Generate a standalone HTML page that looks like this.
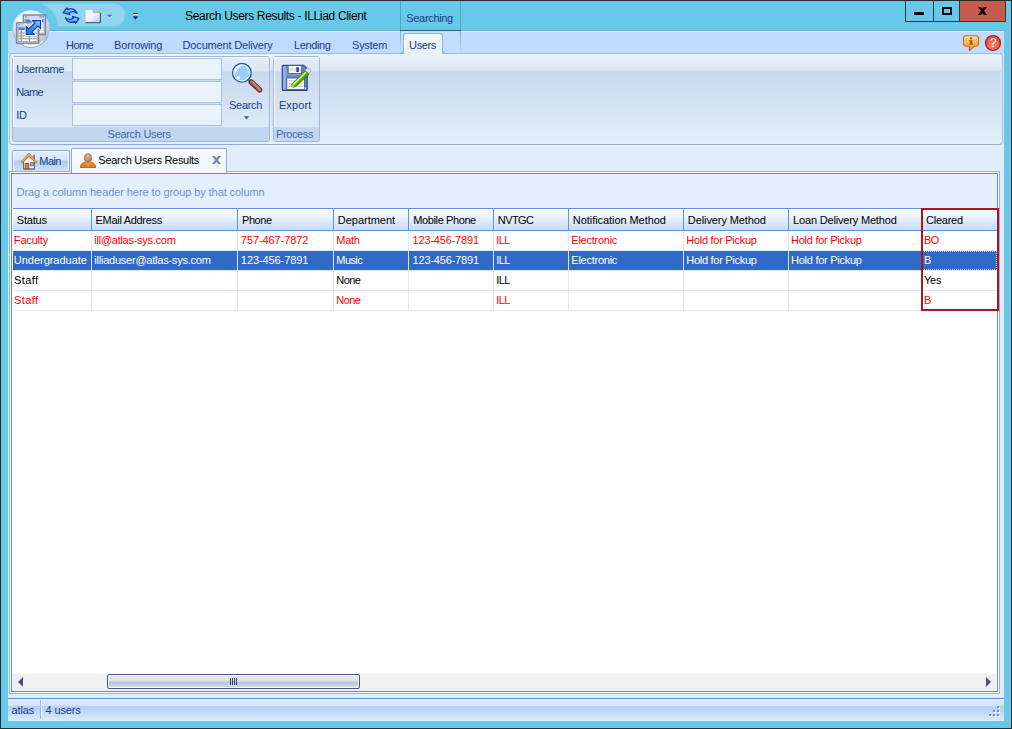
<!DOCTYPE html>
<html>
<head>
<meta charset="utf-8">
<title>Search Users Results - ILLiad Client</title>
<style>
html,body{margin:0;padding:0;}
body{width:1012px;height:729px;overflow:hidden;background:#67c9e8;font-family:"Liberation Sans",sans-serif;font-size:11px;color:#15428b;}
#win{position:absolute;left:0;top:0;width:1012px;height:729px;background:#67c9e8;overflow:hidden;}
.abs{position:absolute;}
.t{position:absolute;white-space:nowrap;line-height:13px;height:13px;}
/* window border */
#bt{left:0;top:0;width:1012px;height:1px;background:#2a2a2a;}
#bl{left:0;top:0;width:1px;height:729px;background:#2a2a2a;}
#br{left:1011px;top:0;width:1px;height:729px;background:#2a2a2a;}
#bb{left:0;top:728px;width:1012px;height:1px;background:#2a2a2a;}
/* client */
#client{left:8px;top:31px;width:996px;height:690px;background:#e1edfc;}
#tabrow{left:8px;top:31px;width:996px;height:23px;background:#bfdbff;}
/* ribbon panel */
#ribbon{left:9px;top:53px;width:994px;height:92px;border:1px solid #a3bce3;border-bottom-color:#94aaca;border-radius:4px;box-sizing:border-box;box-shadow:inset 0 0 0 1px #daf6fc;
 background:linear-gradient(to bottom,#ebf2fb 0px,#dde8f6 16px,#c8d9ed 17px,#e3effb 89px);}
.grp{position:absolute;top:56px;height:86px;border:1px solid #a0b9da;border-radius:3px;box-sizing:border-box;
 background:linear-gradient(to bottom,#e6effa 0px,#d9e6f5 14px,#c9daee 15px,#dde9f7 70px,#c1d7ef 70px,#c1d7ef 100%);}
.grp:before{content:"";position:absolute;left:0;top:0;width:1px;height:70px;background:rgba(255,255,255,.85);}
.grp:after{content:"";position:absolute;left:0;top:0;right:0;height:1px;background:rgba(255,255,255,.7);}
.inp{position:absolute;left:72px;width:150px;height:22px;box-sizing:border-box;border:1px solid #abc1de;background:#eaf2fb;}
/* doc tabs */
#tabMain{left:12px;top:150px;width:58px;height:22px;box-sizing:border-box;border:1px solid #8aa9d8;border-bottom:none;border-radius:2px 2px 0 0;box-shadow:inset 1px 1px 0 #f2f7fe,inset -1px 0 0 #f2f7fe;
 background:linear-gradient(to bottom,#e2ecfb 0,#d9e6f9 9px,#b4cdf1 10px,#bdd3f3 14px,#d5e3f8 21px);}
#tabRes{left:71px;top:148px;width:156px;height:25px;box-sizing:border-box;border:1px solid #8aa9d8;border-bottom:none;border-radius:2px 2px 0 0;background:linear-gradient(to bottom,#ffffff 0,#f6f9fe 4px,#f3f7fe 100%);}
#panel{left:9px;top:171px;width:991px;height:523px;box-sizing:border-box;border:1px solid #9bb0d4;background:#fff;}
#panelIn{left:11px;top:173px;width:987px;height:519px;box-sizing:border-box;border:1px solid #5d8ad0;background:#fff;}
#groupbar{left:12px;top:174px;width:985px;height:34px;background:#e4eefc;}
#hdr{left:13px;top:208px;width:984px;height:23px;box-sizing:border-box;border-top:1px solid #6093d8;border-bottom:1px solid #6093d8;
 background:linear-gradient(to bottom,#fbfdff 0,#eaf3fe 40%,#d5e5fa 70%,#c6dcf8 100%);}
.hs{position:absolute;top:209px;width:1px;height:21px;background:#6093d8;}
.vs{position:absolute;top:231px;width:1px;height:80px;background:#dfe9f9;}
.hl{position:absolute;left:13px;width:984px;height:1px;background:#dfe9f9;}
#sel{left:13px;top:251px;width:984px;height:19px;background:#316ac5;}
.ht{color:#000;}
.r{color:#ee1c25;}
.k{color:#000;}
.w{color:#fff;}

#focus{left:922px;top:251px;width:75px;height:19px;box-sizing:border-box;border:1px dotted #e9d09a;}
#redbox{left:921px;top:208px;width:78px;height:103px;box-sizing:border-box;border:2px solid #b3131d;}
#sbar{left:12px;top:673px;width:984px;height:18px;background:#f0f0f0;border-top:1px solid #fafafa;box-sizing:border-box;}
#sthumb{left:107px;top:674px;width:253px;height:15px;box-sizing:border-box;border:1px solid #46568a;border-radius:2px;box-shadow:inset 0 0 0 1px #f4f6fa;
 background:linear-gradient(to bottom,#e6e9f1 0,#dde2ec 45%,#bbc6d9 55%,#c6cfdf 75%,#e0e5ef 100%);}
#sal{left:18px;top:677px;width:0;height:0;border-top:5px solid transparent;border-bottom:5px solid transparent;border-right:5px solid #44527e;}
#sar{left:986px;top:677px;width:0;height:0;border-top:5px solid transparent;border-bottom:5px solid transparent;border-left:5px solid #44527e;}

/* window controls */
#ctl{left:905px;top:1px;width:101px;height:21px;box-sizing:border-box;border:1px solid #353535;border-top:none;background:#67c9e8;}
#ctlClose{left:960px;top:1px;width:45px;height:20px;background:#c75a4f;}
.csep{position:absolute;top:1px;width:1px;height:20px;background:#353535;}
/* context tab */
#ctx{left:400px;top:1px;width:61px;height:53px;box-sizing:border-box;border-left:1px solid #4fa3bf;border-right:1px solid #4fa3bf;}
#ctxLine{left:400px;top:30px;width:61px;height:1px;background:#2f5f78;}
#ctxLow{left:401px;top:31px;width:59px;height:22px;background:#c4deff;}
#ctxL{left:400px;top:31px;width:1px;height:22px;background:linear-gradient(to bottom,#7fa6d8,#bfdbff);}
#ctxR{left:460px;top:31px;width:1px;height:22px;background:linear-gradient(to bottom,#7fa6d8,#bfdbff);}
#tabUsers{left:403px;top:33px;width:40px;height:21px;box-sizing:border-box;border:1px solid #8db2e3;border-bottom:none;border-radius:3px 3px 0 0;
 background:linear-gradient(to bottom,#f4f8fe 0,#e8effa 100%);box-shadow:inset -1px 1px 0 #e4fbff, inset 1px 0 0 #f8fbff;}
#tabUsersFoot{left:404px;top:53px;width:38px;height:2px;background:#e9f0fa;}
#footL{left:400px;top:51px;width:3px;height:3px;border-bottom:1px solid #8db2e3;border-right:1px solid #8db2e3;border-radius:0 0 3px 0;box-sizing:border-box;}
#footR{left:443px;top:51px;width:3px;height:3px;border-bottom:1px solid #8db2e3;border-left:1px solid #8db2e3;border-radius:0 0 0 3px;box-sizing:border-box;}
/* QAT */
#qat{left:44px;top:4px;width:81px;height:22px;box-sizing:border-box;border:1px solid #7fd2ec;border-radius:0 11px 11px 0;background:#8dd5ee;}
/* status bar */
#status{left:8px;top:698px;width:996px;height:23px;background:linear-gradient(to bottom,#5d8acb 0,#5d8acb 1px,#f3f8fe 1px,#f3f8fe 2px,#d9e7fb 2px,#d3e3fa 8px,#b6d0f5 8px,#bcd4f6 12px,#dce9fa 22px,#e4eefb 23px);}
.grip{position:absolute;width:2px;height:2px;background:#fff;}
.grip:before{content:"";position:absolute;left:-1px;top:-1px;width:2px;height:2px;background:#5c8cda;}
</style>
</head>
<body>
<div id="win">
<div class="abs" id="client"></div>
<div class="abs" id="tabrow"></div>
<div class="abs" style="left:8px;top:30px;width:996px;height:1px;background:#5fb2cf"></div><div class="abs" style="left:8px;top:31px;width:996px;height:1px;background:#e2eefd"></div>


<!-- context tab + controls -->
<div class="abs" id="ctx"></div><div class="abs" id="ctxLow"></div><div class="abs" id="ctxL"></div><div class="abs" id="ctxR"></div><div class="abs" id="ctxLine"></div>
<div class="abs" id="ctl"></div><div class="abs" id="ctlClose"></div>
<div class="csep" style="left:933px"></div><div class="csep" style="left:959px"></div>
<div class="abs" style="left:914px;top:12px;width:10px;height:3px;background:#000"></div>
<div class="abs" style="left:942px;top:7px;width:10px;height:8px;box-sizing:border-box;border:2px solid #000;border-top-width:2px"></div>
<svg class="abs" style="left:977px;top:6px" width="11" height="10" viewBox="977 6 11 10"><path d="M978 7 H981.2 L987 15 H983.8 Z M983.8 7 H987 L981.2 15 H978 Z" fill="#000"/></svg>
<svg class="abs" style="left:40px;top:2px" width="88" height="26" viewBox="40 2 88 26"><path d="M42.5 3.8 H114 A11.1 11.1 0 0 1 114 26 H58.6 A27.6 27.6 0 0 0 42.5 3.8 Z" fill="#8fd5ee" stroke="#84d1ec" stroke-width="1"/></svg>
<!-- title -->

<!-- ribbon tabs -->

<div class="abs" id="ribbon"></div>
<div class="abs" id="tabUsers"></div><div class="abs" id="tabUsersFoot"></div><div class="abs" id="footL"></div><div class="abs" id="footR"></div>
<div class="grp" style="left:12px;width:258px;"></div>
<div class="grp" style="left:273px;width:47px;"></div>
<div class="inp" style="top:58px;"></div>
<div class="inp" style="top:81px;"></div>
<div class="inp" style="top:104px;"></div>

<!-- doc tabs -->
<div class="abs" id="tabMain"></div>
<div class="abs" id="panel"></div>
<div class="abs" id="panelIn"></div>
<div class="abs" id="tabRes"></div>

<div class="abs" id="groupbar"></div>
<div class="abs" id="hdr"></div>

<div class="hs" style="left:91px"></div><div class="vs" style="left:91px"></div>
<div class="hs" style="left:237px"></div><div class="vs" style="left:237px"></div>
<div class="hs" style="left:333px"></div><div class="vs" style="left:333px"></div>
<div class="hs" style="left:408px"></div><div class="vs" style="left:408px"></div>
<div class="hs" style="left:493px"></div><div class="vs" style="left:493px"></div>
<div class="hs" style="left:568px"></div><div class="vs" style="left:568px"></div>
<div class="hs" style="left:683px"></div><div class="vs" style="left:683px"></div>
<div class="hs" style="left:788px"></div><div class="vs" style="left:788px"></div>
<div class="hs" style="left:921px"></div><div class="vs" style="left:921px"></div>
<div class="hl" style="top:250px"></div>
<div class="hl" style="top:270px"></div>
<div class="hl" style="top:290px"></div>
<div class="hl" style="top:310px"></div>
<div class="abs" id="sel"></div>
<div class="abs" style="left:91px;top:251px;width:1px;height:19px;background:#d9e6f7"></div>
<div class="abs" style="left:237px;top:251px;width:1px;height:19px;background:#d9e6f7"></div>
<div class="abs" style="left:333px;top:251px;width:1px;height:19px;background:#d9e6f7"></div>
<div class="abs" style="left:408px;top:251px;width:1px;height:19px;background:#d9e6f7"></div>
<div class="abs" style="left:493px;top:251px;width:1px;height:19px;background:#d9e6f7"></div>
<div class="abs" style="left:568px;top:251px;width:1px;height:19px;background:#d9e6f7"></div>
<div class="abs" style="left:683px;top:251px;width:1px;height:19px;background:#d9e6f7"></div>
<div class="abs" style="left:788px;top:251px;width:1px;height:19px;background:#d9e6f7"></div>
<div class="abs" style="left:921px;top:251px;width:1px;height:19px;background:#d9e6f7"></div>
<div class="abs" id="focus"></div>
<div class="abs" id="redbox"></div>
<!-- scrollbar -->
<div class="abs" id="sbar"></div><div class="abs" id="sthumb"></div>
<div class="abs" style="left:230px;top:678px;width:1px;height:7px;background:#2f3f73"></div><div class="abs" style="left:232px;top:678px;width:1px;height:7px;background:#2f3f73"></div><div class="abs" style="left:234px;top:678px;width:1px;height:7px;background:#2f3f73"></div><div class="abs" style="left:236px;top:678px;width:1px;height:7px;background:#2f3f73"></div>
<div class="abs" id="sal"></div><div class="abs" id="sar"></div>


<!-- status -->
<div class="abs" id="status"></div>
<div class="abs" style="left:40px;top:700px;width:1px;height:19px;background:#9ab6df"></div><div class="abs" style="left:41px;top:700px;width:1px;height:19px;background:#eef4fd"></div>
<div class="grip" style="left:998px;top:707px"></div><div class="grip" style="left:994px;top:711px"></div><div class="grip" style="left:998px;top:711px"></div><div class="grip" style="left:990px;top:715px"></div><div class="grip" style="left:994px;top:715px"></div><div class="grip" style="left:998px;top:715px"></div>

<div class="t" style="left:185.10px;top:9px;font-size:12px;line-height:14px;height:14px;color:#000000;letter-spacing:-0.331px;">Search Users Results - ILLiad Client</div>
<div class="t" style="left:406.35px;top:12px;font-size:11px;line-height:13px;height:13px;color:#1a3a8c;letter-spacing:-0.339px;">Searching</div>
<div class="t" style="left:66.10px;top:39px;font-size:11px;line-height:13px;height:13px;color:#15428b;letter-spacing:-0.586px;">Home</div>
<div class="t" style="left:114.10px;top:39px;font-size:11px;line-height:13px;height:13px;color:#15428b;letter-spacing:-0.170px;">Borrowing</div>
<div class="t" style="left:182.60px;top:39px;font-size:11px;line-height:13px;height:13px;color:#15428b;letter-spacing:-0.172px;">Document Delivery</div>
<div class="t" style="left:294.10px;top:39px;font-size:11px;line-height:13px;height:13px;color:#15428b;letter-spacing:-0.379px;">Lending</div>
<div class="t" style="left:352.10px;top:39px;font-size:11px;line-height:13px;height:13px;color:#15428b;letter-spacing:-0.281px;">System</div>
<div class="t" style="left:409.10px;top:39px;font-size:11px;line-height:13px;height:13px;color:#15428b;letter-spacing:-0.397px;">Users</div>
<div class="t" style="left:16.20px;top:63px;font-size:11px;line-height:13px;height:13px;color:#15428b;letter-spacing:-0.369px;">Username</div>
<div class="t" style="left:16.20px;top:86px;font-size:11px;line-height:13px;height:13px;color:#15428b;letter-spacing:-0.600px;">Name</div>
<div class="t" style="left:16.20px;top:109px;font-size:11px;line-height:13px;height:13px;color:#15428b;letter-spacing:-0.350px;">ID</div>
<div class="t" style="left:229.10px;top:99px;font-size:11px;line-height:13px;height:13px;color:#15428b;letter-spacing:-0.310px;">Search</div>
<div class="t" style="left:278.90px;top:99px;font-size:11px;line-height:13px;height:13px;color:#15428b;letter-spacing:0.117px;">Export</div>
<div class="t" style="left:107.60px;top:128px;font-size:11px;line-height:13px;height:13px;color:#3e6aaa;letter-spacing:-0.303px;">Search Users</div>
<div class="t" style="left:276.10px;top:128px;font-size:11px;line-height:13px;height:13px;color:#3e6aaa;letter-spacing:-0.407px;">Process</div>
<div class="t" style="left:39.35px;top:155px;font-size:11px;line-height:13px;height:13px;color:#15428b;letter-spacing:-0.586px;">Main</div>
<div class="t" style="left:98.35px;top:154px;font-size:11px;line-height:13px;height:13px;color:#000000;letter-spacing:-0.281px;">Search Users Results</div>
<div class="t" style="left:16.60px;top:186px;font-size:11px;line-height:13px;height:13px;color:#6d92d6;letter-spacing:-0.080px;">Drag a column header here to group by that column</div>
<div class="t" style="left:16.85px;top:214px;font-size:11px;line-height:13px;height:13px;color:#000000;letter-spacing:-0.198px;">Status</div>
<div class="t" style="left:95.60px;top:214px;font-size:11px;line-height:13px;height:13px;color:#000000;letter-spacing:-0.312px;">EMail Address</div>
<div class="t" style="left:242.10px;top:214px;font-size:11px;line-height:13px;height:13px;color:#000000;letter-spacing:-0.463px;">Phone</div>
<div class="t" style="left:337.85px;top:214px;font-size:11px;line-height:13px;height:13px;color:#000000;letter-spacing:-0.023px;">Department</div>
<div class="t" style="left:413.35px;top:214px;font-size:11px;line-height:13px;height:13px;color:#000000;letter-spacing:-0.398px;">Mobile Phone</div>
<div class="t" style="left:497.85px;top:214px;font-size:11px;line-height:13px;height:13px;color:#000000;letter-spacing:-0.600px;">NVTGC</div>
<div class="t" style="left:572.85px;top:214px;font-size:11px;line-height:13px;height:13px;color:#000000;letter-spacing:-0.062px;">Notification Method</div>
<div class="t" style="left:687.85px;top:214px;font-size:11px;line-height:13px;height:13px;color:#000000;letter-spacing:-0.099px;">Delivery Method</div>
<div class="t" style="left:793.10px;top:214px;font-size:11px;line-height:13px;height:13px;color:#000000;letter-spacing:-0.176px;">Loan Delivery Method</div>
<div class="t" style="left:926.10px;top:214px;font-size:11px;line-height:13px;height:13px;color:#000000;letter-spacing:-0.254px;">Cleared</div>
<div class="t" style="left:13.85px;top:234px;font-size:11px;line-height:13px;height:13px;color:#ff0000;letter-spacing:-0.174px;">Faculty</div>
<div class="t" style="left:94.35px;top:234px;font-size:11px;line-height:13px;height:13px;color:#ff0000;letter-spacing:-0.264px;">ill@atlas-sys.com</div>
<div class="t" style="left:240.85px;top:234px;font-size:11px;line-height:13px;height:13px;color:#ff0000;letter-spacing:-0.085px;">757-467-7872</div>
<div class="t" style="left:336.35px;top:234px;font-size:11px;line-height:13px;height:13px;color:#ff0000;letter-spacing:-0.305px;">Math</div>
<div class="t" style="left:412.60px;top:234px;font-size:11px;line-height:13px;height:13px;color:#ff0000;letter-spacing:-0.189px;">123-456-7891</div>
<div class="t" style="left:496.35px;top:234px;font-size:11px;line-height:13px;height:13px;color:#ff0000;letter-spacing:-0.600px;">ILL</div>
<div class="t" style="left:571.35px;top:234px;font-size:11px;line-height:13px;height:13px;color:#ff0000;letter-spacing:-0.255px;">Electronic</div>
<div class="t" style="left:686.35px;top:234px;font-size:11px;line-height:13px;height:13px;color:#ff0000;letter-spacing:-0.290px;">Hold for Pickup</div>
<div class="t" style="left:791.10px;top:234px;font-size:11px;line-height:13px;height:13px;color:#ff0000;letter-spacing:-0.273px;">Hold for Pickup</div>
<div class="t" style="left:924.10px;top:234px;font-size:11px;line-height:13px;height:13px;color:#ff0000;letter-spacing:-0.600px;">BO</div>
<div class="t" style="left:13.85px;top:254px;font-size:11px;line-height:13px;height:13px;color:#ffffff;letter-spacing:-0.030px;">Undergraduate</div>
<div class="t" style="left:94.35px;top:254px;font-size:11px;line-height:13px;height:13px;color:#ffffff;letter-spacing:-0.232px;">illiaduser@atlas-sys.com</div>
<div class="t" style="left:240.85px;top:254px;font-size:11px;line-height:13px;height:13px;color:#ffffff;letter-spacing:-0.085px;">123-456-7891</div>
<div class="t" style="left:336.35px;top:254px;font-size:11px;line-height:13px;height:13px;color:#ffffff;letter-spacing:-0.597px;">Music</div>
<div class="t" style="left:412.60px;top:254px;font-size:11px;line-height:13px;height:13px;color:#ffffff;letter-spacing:-0.189px;">123-456-7891</div>
<div class="t" style="left:496.35px;top:254px;font-size:11px;line-height:13px;height:13px;color:#ffffff;letter-spacing:-0.600px;">ILL</div>
<div class="t" style="left:571.35px;top:254px;font-size:11px;line-height:13px;height:13px;color:#ffffff;letter-spacing:-0.255px;">Electronic</div>
<div class="t" style="left:686.35px;top:254px;font-size:11px;line-height:13px;height:13px;color:#ffffff;letter-spacing:-0.290px;">Hold for Pickup</div>
<div class="t" style="left:791.10px;top:254px;font-size:11px;line-height:13px;height:13px;color:#ffffff;letter-spacing:-0.273px;">Hold for Pickup</div>
<div class="t" style="left:924.10px;top:254px;font-size:11px;line-height:13px;height:13px;color:#ffffff;letter-spacing:0.000px;">B</div>
<div class="t" style="left:14.10px;top:274px;font-size:11px;line-height:13px;height:13px;color:#000000;letter-spacing:0.362px;">Staff</div>
<div class="t" style="left:336.35px;top:274px;font-size:11px;line-height:13px;height:13px;color:#000000;letter-spacing:-0.574px;">None</div>
<div class="t" style="left:496.35px;top:274px;font-size:11px;line-height:13px;height:13px;color:#000000;letter-spacing:-0.600px;">ILL</div>
<div class="t" style="left:924.10px;top:274px;font-size:11px;line-height:13px;height:13px;color:#000000;letter-spacing:-0.318px;">Yes</div>
<div class="t" style="left:14.10px;top:294px;font-size:11px;line-height:13px;height:13px;color:#ff0000;letter-spacing:0.362px;">Staff</div>
<div class="t" style="left:336.35px;top:294px;font-size:11px;line-height:13px;height:13px;color:#ff0000;letter-spacing:-0.574px;">None</div>
<div class="t" style="left:496.35px;top:294px;font-size:11px;line-height:13px;height:13px;color:#ff0000;letter-spacing:-0.600px;">ILL</div>
<div class="t" style="left:924.10px;top:294px;font-size:11px;line-height:13px;height:13px;color:#ff0000;letter-spacing:0.000px;">B</div>
<div class="t" style="left:11.60px;top:704px;font-size:11px;line-height:13px;height:13px;color:#15428b;letter-spacing:-0.150px;">atlas</div>
<div class="t" style="left:45.60px;top:704px;font-size:11px;line-height:13px;height:13px;color:#15428b;letter-spacing:-0.154px;">4 users</div>
<!-- ICONS -->
<!-- search magnifier 32x32 at (231,62) -->
<svg class="abs" style="left:230px;top:61px" width="34" height="34" viewBox="0 0 34 34">
<defs>
<radialGradient id="lens" cx="0.55" cy="0.5" r="0.6"><stop offset="0" stop-color="#9ccbf8"/><stop offset="0.7" stop-color="#a4cff8"/><stop offset="1" stop-color="#cfe6fc"/></radialGradient>
<linearGradient id="hand" gradientUnits="userSpaceOnUse" x1="23.9" y1="26.5" x2="27.1" y2="23.3"><stop offset="0" stop-color="#7c3636"/><stop offset="0.6" stop-color="#c48c8c"/><stop offset="1" stop-color="#a86464"/></linearGradient>
</defs>
<path d="M17.8 18 L20.6 20.8" stroke="#6f7886" stroke-width="2.6" stroke-linecap="butt"/>
<path d="M21.4 21.2 L29.6 28.8" stroke="#6a2828" stroke-width="5.4" stroke-linecap="round"/>
<path d="M21.6 21.2 L29.5 28.5" stroke="url(#hand)" stroke-width="3.6" stroke-linecap="round"/>
<circle cx="11.9" cy="11.8" r="9.3" fill="url(#lens)" stroke="#1d5c9c" stroke-width="1.4"/>
<circle cx="11.9" cy="11.8" r="8.1" fill="none" stroke="#f2f9ff" stroke-width="1" opacity="0.9"/>
<path d="M4.6 10.8 C4.8 6.6 8.6 3.8 12.6 4.2 C9.6 5.6 7 7.4 6.2 10.2 C5.8 11.6 4.6 12 4.6 10.8 Z" fill="#ffffff" opacity="0.9"/>
<path d="M15.6 5.6 C18 6.8 19.2 9.6 18.6 12.4 C18.2 10 17 7.4 15.6 5.6 Z" fill="#ffffff" opacity="0.7"/>
<circle cx="8.4" cy="16.4" r="1.7" fill="#ffffff" opacity="0.85"/>
</svg>
<!-- dropdown under Search -->
<svg class="abs" style="left:243px;top:116px" width="7" height="4" viewBox="0 0 7 4"><path d="M0.7 0.2 H6.3 L3.5 3.4 Z" fill="#44609c"/></svg>

<!-- export floppy + pencil -->
<svg class="abs" style="left:281px;top:63px" width="30" height="30" viewBox="0 0 30 30">
<defs>
<linearGradient id="flop" x1="0" y1="0" x2="1" y2="0"><stop offset="0" stop-color="#9cbaee"/><stop offset="0.14" stop-color="#86a8e2"/><stop offset="0.16" stop-color="#6c90d2"/><stop offset="1" stop-color="#5d82c6"/></linearGradient>
<linearGradient id="pen" gradientUnits="userSpaceOnUse" x1="17.2" y1="13.2" x2="20.8" y2="16.8"><stop offset="0" stop-color="#5a9c10"/><stop offset="0.3" stop-color="#a8e634"/><stop offset="0.48" stop-color="#ecffa0"/><stop offset="0.62" stop-color="#96dc1e"/><stop offset="1" stop-color="#478a0a"/></linearGradient>
</defs>
<path d="M2.2 2.4 H22.6 L26.2 5.8 V26.4 a0.9 0.9 0 0 1 -0.9 0.9 H2.2 a0.9 0.9 0 0 1 -0.9 -0.9 V3.3 a0.9 0.9 0 0 1 0.9 -0.9 Z" fill="url(#flop)" stroke="#2a4580" stroke-width="1.2"/>
<path d="M4.6 11.2 H25" stroke="#86a8e4" stroke-width="1.4"/>
<rect x="7.2" y="2.6" width="13.4" height="7.8" fill="#e2e2e4" stroke="#55555c" stroke-width="0.9"/>
<rect x="7.7" y="3.1" width="12.4" height="2" fill="#ffffff"/>
<rect x="7.7" y="8.4" width="12.4" height="1.5" fill="#ffffff"/>
<rect x="15.2" y="4.2" width="2.8" height="4.8" fill="#3a5590"/>
<rect x="5.8" y="15" width="17.6" height="11.4" fill="#f7f7f9" stroke="#3c528a" stroke-width="0.8"/>
<path d="M7.4 17.8 H17 M7.4 20.6 H21.6 M7.4 23.4 H21.6" stroke="#b4bfdc" stroke-width="0.9"/>
<rect x="23.6" y="24.4" width="1.5" height="1.5" fill="#eef2fd"/>
<!-- pencil -->
<path d="M10.2 23.8 C9.8 22.4 10.6 20.8 12 19.6 L24.4 7.6 L28.2 11.4 L15.6 23.2 C14 24.6 11.4 25 10.2 23.8 Z" fill="#4a8c0c"/>
<path d="M11 23.2 C10.8 22.2 11.4 21 12.6 20 L24.5 8.6 L27.2 11.3 L15.2 22.6 C13.8 23.8 12 24 11 23.2 Z" fill="url(#pen)"/>
<ellipse cx="11.8" cy="22.6" rx="1.5" ry="1.3" fill="#8ee010" transform="rotate(-45 11.8 22.6)"/>
<path d="M24 7.2 L25.9 5.3 a1.3 1.3 0 0 1 1.8 0 L29.4 7 a1.3 1.3 0 0 1 0 1.8 L27.6 10.8 Z" fill="#e4e4e4" stroke="#8c8c8c" stroke-width="0.7"/>
<path d="M24.4 7.8 L27.4 10.8" stroke="#6e6e6e" stroke-width="0.9"/>
</svg>

<!-- house icon at (21,153) -->
<svg class="abs" style="left:20px;top:153px" width="18" height="18" viewBox="0 0 18 18">
<rect x="13.4" y="1.8" width="1.3" height="4.6" fill="#c81414"/>
<path d="M3.6 8.2 L9 3.4 L14.4 8.2 V16.2 H3.6 Z" fill="#f2f2f2" stroke="#5a5a5a" stroke-width="1"/>
<path d="M3.8 15.6 H14.2" stroke="#8a8a8a" stroke-width="1"/>
<path d="M1.4 9.6 L9 1.6 L16.6 9.6" fill="none" stroke="#b8742e" stroke-width="2.6" stroke-linejoin="miter"/>
<path d="M1.8 9.0 L9 1.6 L16.2 9.0" fill="none" stroke="#eab273" stroke-width="1.1"/>
<rect x="5.2" y="10.6" width="3.6" height="5.4" fill="#d08a3c" stroke="#7a4a1a" stroke-width="0.8"/>
<rect x="10.6" y="9.6" width="2.6" height="3.2" fill="#8ec4f2" stroke="#4a5a7a" stroke-width="0.8"/>
</svg>

<!-- user icon at (80,153) -->
<svg class="abs" style="left:79px;top:153px" width="18" height="15.4" viewBox="0 0 18 17" preserveAspectRatio="none">
<defs>
<radialGradient id="head" cx="0.45" cy="0.35" r="0.7"><stop offset="0" stop-color="#e3b98c"/><stop offset="1" stop-color="#a86e3e"/></radialGradient>
<linearGradient id="body" x1="0" y1="0" x2="0" y2="1"><stop offset="0" stop-color="#f99a3c"/><stop offset="1" stop-color="#e86408"/></linearGradient>
</defs>
<path d="M1.4 16.2 C1.4 12.2 3.4 10.8 6.8 10 L11.2 10 C14.6 10.8 16.6 12.2 16.6 16.2 Z" fill="url(#body)" stroke="#c2560a" stroke-width="0.9"/>
<path d="M7.2 10 L9 16 L10.8 10 Z" fill="#f0cfa8"/>
<path d="M8.3 10.4 L9 15.4 L9.7 10.4 Z" fill="#9a6236"/>
<ellipse cx="9" cy="5.5" rx="3.8" ry="4.9" fill="url(#head)" stroke="#a06a3a" stroke-width="0.6"/>
</svg>

<!-- tab close X -->
<svg class="abs" style="left:211px;top:155px" width="11" height="10" viewBox="211 155 11 10"><path d="M212 156 H214.8 L221 164 H218.2 Z M218.2 156 H221 L214.8 164 H212 Z" fill="#7787aa"/></svg>

<!-- info bubble -->
<svg class="abs" style="left:962px;top:34px" width="18" height="18" viewBox="0 0 18 18">
<defs><linearGradient id="bub" x1="0" y1="0" x2="0" y2="1"><stop offset="0" stop-color="#fff0c8"/><stop offset="0.25" stop-color="#fdc968"/><stop offset="0.7" stop-color="#fba83a"/><stop offset="1" stop-color="#f59a28"/></linearGradient></defs>
<path d="M4 1.7 H14 a2.5 2.5 0 0 1 2.5 2.5 V9.7 a2.5 2.5 0 0 1 -2.5 2.5 H12.4 L7.5 16.6 L7.3 12.2 H4 a2.5 2.5 0 0 1 -2.5 -2.5 V4.2 a2.5 2.5 0 0 1 2.5 -2.5 Z" fill="url(#bub)" stroke="#c9651c" stroke-width="1.1" stroke-linejoin="round"/>
<rect x="8" y="3.4" width="2.2" height="1.7" fill="#b24a28"/>
<path d="M7 6.3 H10.3 V9.7 H11.3 V10.8 H7 V9.7 H8.1 V7.4 H7 Z" fill="#b24a28"/>
</svg>
<!-- help -->
<svg class="abs" style="left:984px;top:34px" width="18" height="18" viewBox="0 0 18 18">
<defs><radialGradient id="hlp" cx="0.5" cy="0.65" r="0.75"><stop offset="0" stop-color="#fa8a6c"/><stop offset="0.55" stop-color="#ee5c42"/><stop offset="1" stop-color="#d42a1c"/></radialGradient></defs>
<circle cx="9" cy="9" r="7.5" fill="url(#hlp)" stroke="#aa1616" stroke-width="1.2"/>
<text x="9.2" y="13.3" text-anchor="middle" font-family="Liberation Sans, sans-serif" font-size="12.5" fill="#fff">?</text>
</svg>
<!-- ORB -->
<svg class="abs" style="left:11px;top:9px" width="40" height="40" viewBox="0 0 40 40">
<defs>
<radialGradient id="orb" cx="0.42" cy="0.3" r="0.8"><stop offset="0" stop-color="#ffffff"/><stop offset="0.4" stop-color="#eceff5"/><stop offset="0.75" stop-color="#c3ccda"/><stop offset="1" stop-color="#9eabc0"/></radialGradient>
<linearGradient id="orbring" x1="0" y1="0" x2="0" y2="1"><stop offset="0" stop-color="#e9eef5"/><stop offset="1" stop-color="#8f9db3"/></linearGradient>
<linearGradient id="arr" x1="0" y1="1" x2="1" y2="0"><stop offset="0" stop-color="#0f6fd0"/><stop offset="0.6" stop-color="#4a9ae8"/><stop offset="1" stop-color="#a8d0f8"/></linearGradient>
</defs>
<circle cx="20" cy="20" r="18.3" fill="url(#orb)" stroke="url(#orbring)" stroke-width="1"/>
<path d="M6.5 30 C12 37.5 28 37.5 33.5 30 C29 40.5 11 40.5 6.5 30 Z" fill="#ffffff" opacity="0.9"/>
<!-- back window -->
<rect x="12.4" y="6" width="22" height="19.6" fill="#dfe4f6" stroke="#7d899c" stroke-width="1.5"/>
<rect x="13.4" y="7" width="20" height="2.8" fill="#cdd6f6"/>
<path d="M14.2 7.9 H15.8 M28.6 7.9 H30.4 M31.4 7.9 H33" stroke="#5c6678" stroke-width="0.9"/>
<rect x="14" y="10.4" width="19" height="13.8" fill="#ffffff" stroke="#8e99ac" stroke-width="0.8"/>
<rect x="14.4" y="10.8" width="18.2" height="2.4" fill="#3a86d8"/>
<path d="M14.4 16 H31.6 M14.4 18.8 H31.6 M14.4 21.4 H31.6 M28 13.2 V24" stroke="#969696" stroke-width="1"/>
<!-- front window -->
<rect x="5.6" y="13.8" width="22" height="20.4" fill="#dfe4f6" stroke="#7d899c" stroke-width="1.5"/>
<rect x="6.6" y="14.8" width="20" height="2.8" fill="#cdd6f6"/>
<path d="M7.4 15.8 H9" stroke="#5c6678" stroke-width="0.9"/>
<rect x="7.2" y="18.2" width="19" height="14.4" fill="#ffffff" stroke="#8e99ac" stroke-width="0.8"/>
<rect x="7.6" y="18.6" width="18.2" height="2.6" fill="#3a86d8"/>
<path d="M7.6 24 H25.8 M7.6 27 H25.8 M7.6 29.8 H25.8 M10.2 21.2 V32.2 M18.4 27 V32.2" stroke="#8e8e8e" stroke-width="1.1"/>
<!-- arrow -->
<path d="M29.5 11.6 L21.5 11.6 L23.8 13.9 L17.75 19.95 L15.3 17.5 L15.3 25.5 L23.3 25.5 L20.95 23.15 L27 17.1 L29.5 19.6 Z" fill="url(#arr)" stroke="#ffffff" stroke-width="2.8" stroke-linejoin="miter"/>
<path d="M29.5 11.6 L21.5 11.6 L23.8 13.9 L17.75 19.95 L15.3 17.5 L15.3 25.5 L23.3 25.5 L20.95 23.15 L27 17.1 L29.5 19.6 Z" fill="url(#arr)" stroke="#0a3fb4" stroke-width="1.2" stroke-linejoin="miter"/>
</svg>
<!-- QAT icons -->
<svg class="abs" style="left:62px;top:6px" width="19" height="19" viewBox="0 0 19 19">
<defs><linearGradient id="rf" x1="0" y1="0" x2="0" y2="1"><stop offset="0" stop-color="#a8d6fa"/><stop offset="1" stop-color="#3f90e4"/></linearGradient></defs>
<path d="M1.2 6.6 L4.8 1.8 L5.6 3.6 C9.4 1.6 13.6 3.2 15 7.4 C12.4 5.2 9.2 5.4 7 7 L8 8.8 Z" fill="url(#rf)" stroke="#1238b0" stroke-width="1.2" stroke-linejoin="round"/>
<path d="M17 12.4 L13.6 17.4 L12.8 15.6 C9 17.6 4.8 16 3.4 11.6 C6 13.8 9.2 13.8 11.4 12.2 L10.4 10.4 Z" fill="url(#rf)" stroke="#1238b0" stroke-width="1.2" stroke-linejoin="round"/>
</svg>
<svg class="abs" style="left:85px;top:9px" width="17" height="15" viewBox="0 0 17 15">
<defs><linearGradient id="dc" x1="0" y1="0" x2="1" y2="1"><stop offset="0" stop-color="#ffffff"/><stop offset="0.5" stop-color="#eef0fa"/><stop offset="1" stop-color="#b9c1e2"/></linearGradient></defs>
<path d="M0.6 1.2 H7.6 V3.8 H15.2 V13.4 H0.6 Z" fill="url(#dc)"/>
<rect x="7.8" y="1" width="7.4" height="2.8" fill="#a9acb4"/>
<rect x="8.4" y="1.4" width="6.2" height="1" fill="#d4d6da"/>
<path d="M0.4 13.7 H15.6 M15.4 3.8 V14" stroke="#37477c" stroke-width="1"/>
</svg>
<svg class="abs" style="left:106px;top:14px" width="7" height="6" viewBox="0 0 7 6"><path d="M0.8 1.8 H6.2 L3.5 5 Z" fill="#e8f4fc"/><path d="M0.8 0.8 H6.2 L3.5 4 Z" fill="#4a78c8"/></svg>
<svg class="abs" style="left:132px;top:12px" width="7" height="9" viewBox="0 0 7 9"><rect x="1" y="1" width="5" height="1" fill="#1a2a7a"/><rect x="1" y="2" width="5" height="1" fill="#fff"/><path d="M0.8 4.2 H6.2 L3.5 7.8 Z" fill="#1a2a7a"/></svg>

<div class="abs" id="bt"></div><div class="abs" id="bl"></div><div class="abs" id="br"></div><div class="abs" id="bb"></div>
</div>
</body>
</html>
